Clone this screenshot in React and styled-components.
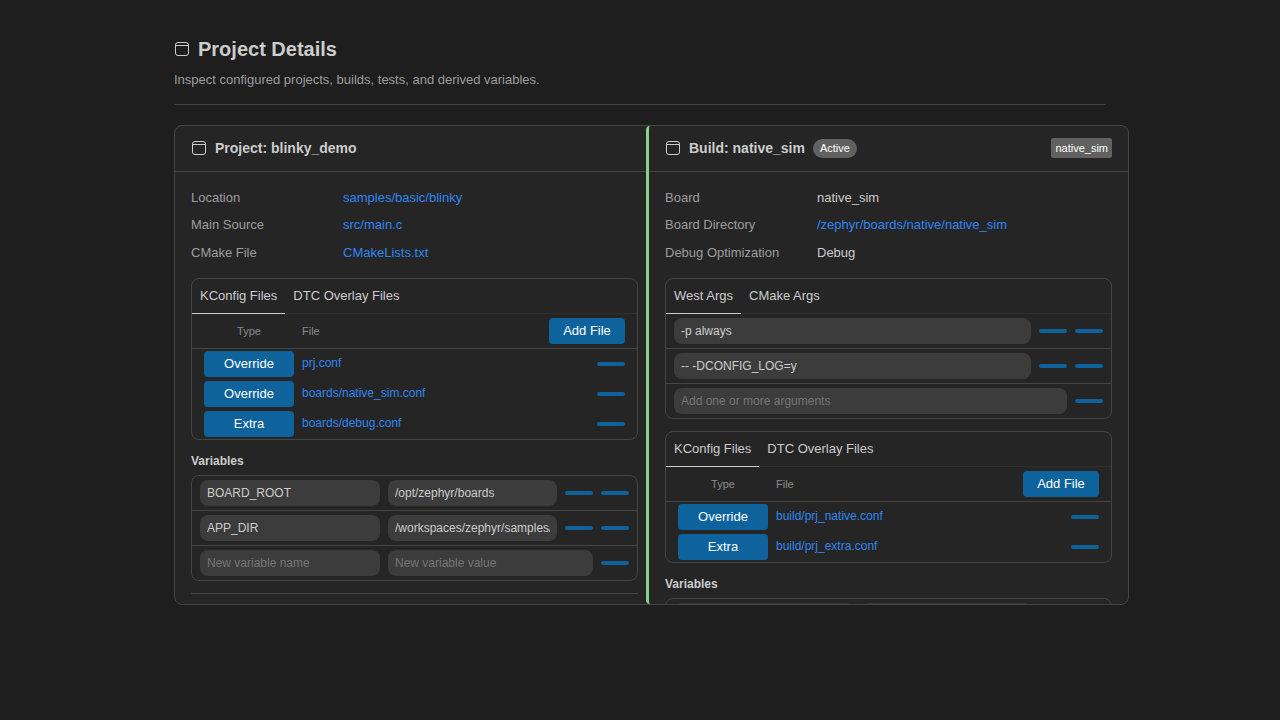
import React from 'react';
import styled, { createGlobalStyle } from 'styled-components';

const GlobalStyle = createGlobalStyle`
  html, body {
    margin: 0;
    height: 100%;
    background: #1e1e1e;
    overflow: hidden;
  }
  body, input, button {
    font-family: "Liberation Sans", Arial, sans-serif;
  }
`;

const Page = styled.div`
  padding: 37px 0 0 174px;
  color: #cccccc;
`;

const Header = styled.header`
  width: 932px;
  padding-bottom: 16px;
  margin-bottom: 20px;
  border-bottom: 1px solid #454545;
`;

const Title = styled.h1`
  display: flex;
  align-items: center;
  gap: 8px;
  margin: 0 0 11px;
  font-size: 20px;
  line-height: 24px;
  font-weight: 700;
`;

const Subtitle = styled.p`
  margin: 0;
  font-size: 13px;
  line-height: 16px;
  color: #9d9d9d;
`;

const Split = styled.div`
  display: flex;
  width: 955px;
  height: 480px;
  box-sizing: border-box;
  background: #252526;
  border: 1px solid #454545;
  border-radius: 8px;
  overflow: hidden;
`;

const Pane = styled.section`
  flex: 0 0 ${(p) => (p.$right ? '482px' : '471px')};
  box-sizing: border-box;
  overflow: hidden;
  ${(p) => p.$right && 'border-left: 3px solid #89d185; border-radius: 4px 0 0 4px;'}
`;

const PaneHeader = styled.div`
  display: flex;
  align-items: center;
  gap: 8px;
  height: 46px;
  box-sizing: border-box;
  padding: 0 16px 1px;
  border-bottom: 1px solid #454545;
  font-size: 14px;
  font-weight: 700;
`;

const PaneBody = styled.div`
  padding: 11.6px ${(p) => (p.$right ? '16px' : '8px')} 0 16px;
`;

const Badge = styled.span`
  padding: 0 7px;
  height: 19px;
  line-height: 19px;
  font-size: 11px;
  font-weight: 400;
  color: #ffffff;
  background: #616161;
  border-radius: 10px;
`;

const Tag = styled.span`
  margin-left: auto;
  padding: 0 4px;
  height: 20px;
  line-height: 20px;
  font-size: 11px;
  font-weight: 400;
  color: #ffffff;
  background: #616161;
  border-radius: 2px;
`;

const InfoGrid = styled.dl`
  display: grid;
  grid-template-columns: 152px 1fr;
  grid-auto-rows: 27.5px;
  align-items: center;
  margin: 0 0 12px;
  font-size: 13px;
`;

const InfoLabel = styled.dt`
  color: #9d9d9d;
`;

const InfoValue = styled.dd`
  margin: 0;
  color: #cccccc;
`;

const Link = styled.a`
  color: #3085f0;
  font-size: 13px;
`;

const FileLink = styled(Link)`
  font-size: 12px;
  margin-bottom: 2px;
`;

const Panel = styled.div`
  box-sizing: border-box;
  margin-bottom: 12px;
  border: 1px solid #454545;
  border-radius: 8px;
  overflow: hidden;
`;

const TabBar = styled.div`
  display: flex;
  height: 35px;
  box-sizing: border-box;
  border-bottom: 1px solid #2f2f2f;
`;

const Tab = styled.div`
  height: 35px;
  box-sizing: border-box;
  padding: 0 8px;
  line-height: 34px;
  font-size: 13px;
  color: #cccccc;
  border-bottom: 1px solid ${(p) => (p.$active ? '#cccccc' : 'transparent')};
`;

const FileHead = styled.div`
  display: grid;
  grid-template-columns: 98px 1fr 76px;
  align-items: center;
  height: 35px;
  padding: 0 12px;
  box-sizing: border-box;
  border-bottom: 1px solid #454545;
  font-size: 11px;
  color: #8b8b8b;
`;

const HeadType = styled.span`
  text-align: center;
  padding-right: 8px;
`;

const FileList = styled.div`
  display: flex;
  flex-direction: column;
  gap: 4px;
  padding: 2px 12px;
`;

const FileRow = styled.div`
  display: grid;
  grid-template-columns: 90px 1fr 28px;
  column-gap: 8px;
  align-items: center;
  height: 26px;
`;

const Button = styled.button`
  height: 26px;
  padding: 0 0 2px;
  border: none;
  border-radius: 4px;
  background: #0e639c;
  color: #ffffff;
  font-size: 13px;
`;

const Dash = styled.button`
  flex: none;
  width: 28px;
  height: 4px;
  padding: 0;
  border: none;
  border-radius: 2px;
  background: #0e639c;
`;

const FieldRow = styled.div`
  display: flex;
  align-items: center;
  gap: 8px;
  height: 34px;
  padding: 0 8px;
  & + & {
    border-top: 1px solid #454545;
  }
`;

const Field = styled.input`
  flex: ${(p) => (p.$name ? '0 0 180px' : '1 1 0')};
  min-width: 0;
  height: 26px;
  box-sizing: border-box;
  padding: 0 7px;
  border: none;
  outline: none;
  border-radius: 8px;
  background: #3c3c3c;
  color: #cccccc;
  font-size: 12px;
  &::placeholder {
    color: #767676;
    opacity: 1;
  }
`;

const SectionLabel = styled.div`
  margin: 14px 0 7px;
  font-size: 12px;
  line-height: 14px;
  font-weight: 700;
  color: #cccccc;
`;

const Rule = styled.hr`
  margin: 0;
  border: none;
  border-top: 1px solid #454545;
`;

const BoxIcon = () => (
  <svg width="16" height="16" viewBox="0 0 16 16" fill="none" stroke="#cccccc" strokeWidth="1">
    <rect x="1.5" y="1.5" width="13" height="13" rx="2.5" />
    <path d="M1.5 4.5h13" />
  </svg>
);

const FilesPanel = ({ rows }) => (
  <Panel>
    <TabBar>
      <Tab $active>KConfig Files</Tab>
      <Tab>DTC Overlay Files</Tab>
    </TabBar>
    <FileHead>
      <HeadType>Type</HeadType>
      <span>File</span>
      <Button>Add File</Button>
    </FileHead>
    <FileList>
      {rows.map(([type, file]) => (
        <FileRow key={file}>
          <Button>{type}</Button>
          <FileLink>{file}</FileLink>
          <Dash />
        </FileRow>
      ))}
    </FileList>
  </Panel>
);

const App = () => (
  <>
    <GlobalStyle />
    <Page>
      <Header>
        <Title>
          <BoxIcon />
          Project Details
        </Title>
        <Subtitle>Inspect configured projects, builds, tests, and derived variables.</Subtitle>
      </Header>
      <Split>
        <Pane>
          <PaneHeader>
            <BoxIcon />
            Project: blinky_demo
          </PaneHeader>
          <PaneBody>
            <InfoGrid>
              <InfoLabel>Location</InfoLabel>
              <InfoValue><Link>samples/basic/blinky</Link></InfoValue>
              <InfoLabel>Main Source</InfoLabel>
              <InfoValue><Link>src/main.c</Link></InfoValue>
              <InfoLabel>CMake File</InfoLabel>
              <InfoValue><Link>CMakeLists.txt</Link></InfoValue>
            </InfoGrid>
            <FilesPanel
              rows={[
                ['Override', 'prj.conf'],
                ['Override', 'boards/native_sim.conf'],
                ['Extra', 'boards/debug.conf'],
              ]}
            />
            <SectionLabel>Variables</SectionLabel>
            <Panel>
              <FieldRow>
                <Field $name readOnly value="BOARD_ROOT" />
                <Field readOnly value="/opt/zephyr/boards" />
                <Dash />
                <Dash />
              </FieldRow>
              <FieldRow>
                <Field $name readOnly value="APP_DIR" />
                <Field readOnly value="/workspaces/zephyr/samples/basic/blinky" />
                <Dash />
                <Dash />
              </FieldRow>
              <FieldRow>
                <Field $name readOnly placeholder="New variable name" />
                <Field readOnly placeholder="New variable value" />
                <Dash />
              </FieldRow>
            </Panel>
            <Rule />
          </PaneBody>
        </Pane>
        <Pane $right>
          <PaneHeader>
            <BoxIcon />
            Build: native_sim
            <Badge>Active</Badge>
            <Tag>native_sim</Tag>
          </PaneHeader>
          <PaneBody $right>
            <InfoGrid>
              <InfoLabel>Board</InfoLabel>
              <InfoValue>native_sim</InfoValue>
              <InfoLabel>Board Directory</InfoLabel>
              <InfoValue><Link>/zephyr/boards/native/native_sim</Link></InfoValue>
              <InfoLabel>Debug Optimization</InfoLabel>
              <InfoValue>Debug</InfoValue>
            </InfoGrid>
            <Panel>
              <TabBar>
                <Tab $active>West Args</Tab>
                <Tab>CMake Args</Tab>
              </TabBar>
              <FieldRow>
                <Field readOnly value="-p always" />
                <Dash />
                <Dash />
              </FieldRow>
              <FieldRow>
                <Field readOnly value="-- -DCONFIG_LOG=y" />
                <Dash />
                <Dash />
              </FieldRow>
              <FieldRow>
                <Field readOnly placeholder="Add one or more arguments" />
                <Dash />
              </FieldRow>
            </Panel>
            <FilesPanel
              rows={[
                ['Override', 'build/prj_native.conf'],
                ['Extra', 'build/prj_extra.conf'],
              ]}
            />
            <SectionLabel>Variables</SectionLabel>
            <Panel>
              <FieldRow>
                <Field $name readOnly />
                <Field readOnly />
                <Dash />
                <Dash />
              </FieldRow>
            </Panel>
          </PaneBody>
        </Pane>
      </Split>
    </Page>
  </>
);

export default App;
